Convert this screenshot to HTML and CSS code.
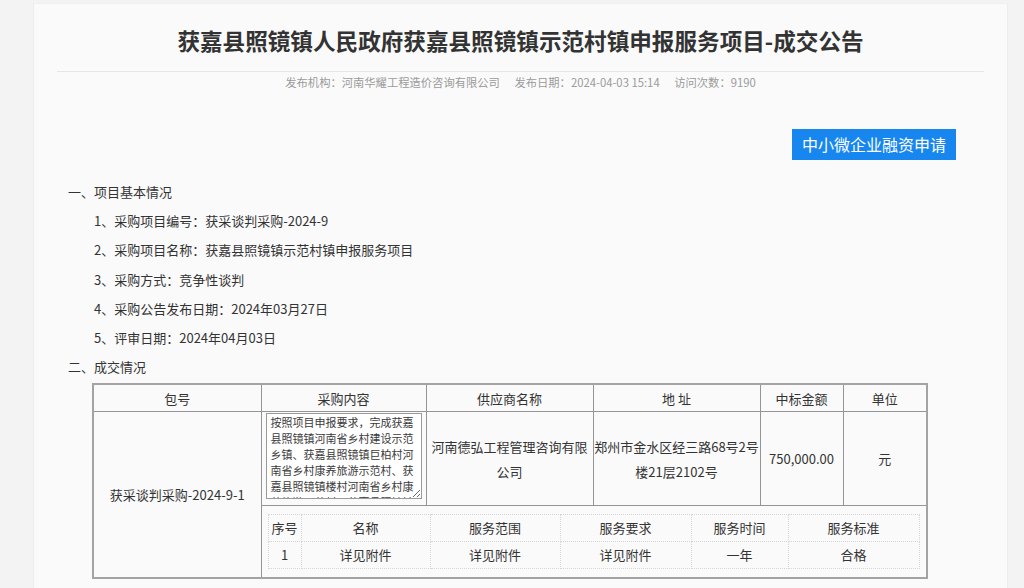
FILE: index.html
```html
<!DOCTYPE html>
<html lang="zh-CN">
<head>
<meta charset="utf-8">
<title>成交公告</title>
<link rel="stylesheet" href="styles.css">
</head>
<body>
<div class="page">
  <h1 class="title">获嘉县照镜镇人民政府获嘉县照镜镇示范村镇申报服务项目-成交公告</h1>
  <div class="divider"></div>
  <div class="meta">
    <span>发布机构：河南华耀工程造价咨询有限公司</span>
    <span>发布日期：2024-04-03 15:14</span>
    <span>访问次数：9190</span>
  </div>
  <div class="actions">
    <a class="btn" href="#">中小微企业融资申请</a>
  </div>
  <div class="content">
    <p class="sec">一、项目基本情况</p>
    <p class="item">1、采购项目编号：获采谈判采购-2024-9</p>
    <p class="item">2、采购项目名称：获嘉县照镜镇示范村镇申报服务项目</p>
    <p class="item">3、采购方式：竞争性谈判</p>
    <p class="item">4、采购公告发布日期：2024年03月27日</p>
    <p class="item">5、评审日期：2024年04月03日</p>
    <p class="sec">二、成交情况</p>
    <table class="deal">
      <colgroup>
        <col class="c1"><col class="c2"><col class="c3"><col class="c4"><col class="c5"><col class="c6">
      </colgroup>
      <thead>
        <tr><th>包号</th><th>采购内容</th><th>供应商名称</th><th>地 址</th><th>中标金额</th><th>单位</th></tr>
      </thead>
      <tbody>
        <tr class="r1">
          <td rowspan="2">获采谈判采购-2024-9-1</td>
          <td class="ta-cell"><textarea class="ta" readonly>按照项目申报要求，完成获嘉县照镜镇河南省乡村建设示范乡镇、获嘉县照镜镇巨柏村河南省乡村康养旅游示范村、获嘉县照镜镇楼村河南省乡村康养旅游示范村、获嘉县照镜镇等示范村镇申报服务工作。</textarea></td>
          <td>河南德弘工程管理咨询有限公司</td>
          <td>郑州市金水区经三路68号2号楼21层2102号</td>
          <td>750,000.00</td>
          <td>元</td>
        </tr>
        <tr>
          <td colspan="5" class="nest-cell">
            <table class="nest">
              <colgroup>
                <col class="n1"><col class="n2"><col class="n3"><col class="n4"><col class="n5"><col class="n6">
              </colgroup>
              <tr><td>序号</td><td>名称</td><td>服务范围</td><td>服务要求</td><td>服务时间</td><td>服务标准</td></tr>
              <tr><td>1</td><td>详见附件</td><td>详见附件</td><td>详见附件</td><td>一年</td><td>合格</td></tr>
            </table>
          </td>
        </tr>
      </tbody>
    </table>
  </div>
</div>
</body>
</html>
```
FILE: styles.css
```css
html, body {
  margin: 0;
  padding: 0;
}
body {
  background: #f3f3f3;
  font-family: "Noto Sans CJK SC", "Noto Sans", sans-serif;
  color: #333;
}
.page {
  margin: 3px 0 0 33px;
  width: 927px;
  padding: 0 23px 60px;
  background: #fafafa;
  border-left: 1px solid #ededed;
  border-right: 1px solid #ededed;
  border-top: 1px solid #f0f0f0;
  min-height: 600px;
}
.title {
  margin: 22px 0 0;
  font-size: 22.6px;
  line-height: 30px;
  font-weight: bold;
  text-align: center;
  color: #333;
}
.divider {
  margin-top: 15px;
  height: 1px;
  background: #e6e6e6;
}
.meta {
  margin-top: 2px;
  font-size: 11.3px;
  line-height: 16px;
  color: #9a9a9a;
  text-align: center;
}
.meta span {
  margin: 0 6px;
}
.actions {
  display: flex;
  justify-content: flex-end;
  padding-right: 28px;
  margin-top: 39px;
}
.btn {
  display: block;
  width: 164px;
  height: 31px;
  line-height: 31px;
  text-align: center;
  background: #1787ef;
  color: #fff;
  font-size: 16px;
  text-decoration: none;
}
.content {
  padding-left: 11px;
  margin-top: 17px;
  font-size: 13px;
  color: #333;
}
.content p {
  margin: 0;
  line-height: 29.2px;
}
.content .item {
  padding-left: 26px;
}
.deal {
  margin: 2px 0 0 24px;
  width: 834px;
  border-collapse: collapse;
  table-layout: fixed;
  border: 2px solid #a3a3a3;
  font-size: 13px;
}
.deal .c1 { width: 168px; }
.deal .c2 { width: 165px; }
.deal .c3 { width: 167px; }
.deal .c4 { width: 167px; }
.deal .c5 { width: 83px; }
.deal .c6 { width: 84px; }
.deal th, .deal > tbody > tr > td {
  border: 1px solid #959595;
  text-align: center;
  vertical-align: middle;
  font-weight: normal;
  line-height: 25px;
  padding: 0;
  color: #333;
}
.deal th {
  height: 26px;
}
.deal .r1 > td {
  height: 93px;
}
.deal .ta-cell {
  vertical-align: top;
  padding: 0 5px 0 4px;
}
.ta {
  display: block;
  box-sizing: border-box;
  width: 156px;
  height: 86px;
  margin: 1px 0 0;
  padding: 0 3px 0 4px;
  border: 1px solid #9a9a9a;
  background: #fff;
  font-family: "Noto Sans CJK SC", sans-serif;
  font-size: 11px;
  line-height: 16px;
  color: #3a3a3a;
  overflow: hidden;
  resize: both;
}
.deal .nest-cell {
  padding: 8px 7px 8px 6px;
}
.nest {
  width: 100%;
  border-collapse: collapse;
  table-layout: fixed;
  border: 1px dotted #d6d6d6;
  font-size: 13px;
}
.nest .n1 { width: 33px; }
.nest .n2 { width: 129px; }
.nest .n3 { width: 130px; }
.nest .n4 { width: 131px; }
.nest .n5 { width: 97px; }
.nest .n6 { width: 131px; }
.nest td {
  border: 1px dotted #d6d6d6;
  text-align: center;
  vertical-align: middle;
  line-height: 26px;
  height: 26px;
  padding: 0;
  color: #333;
}
```
